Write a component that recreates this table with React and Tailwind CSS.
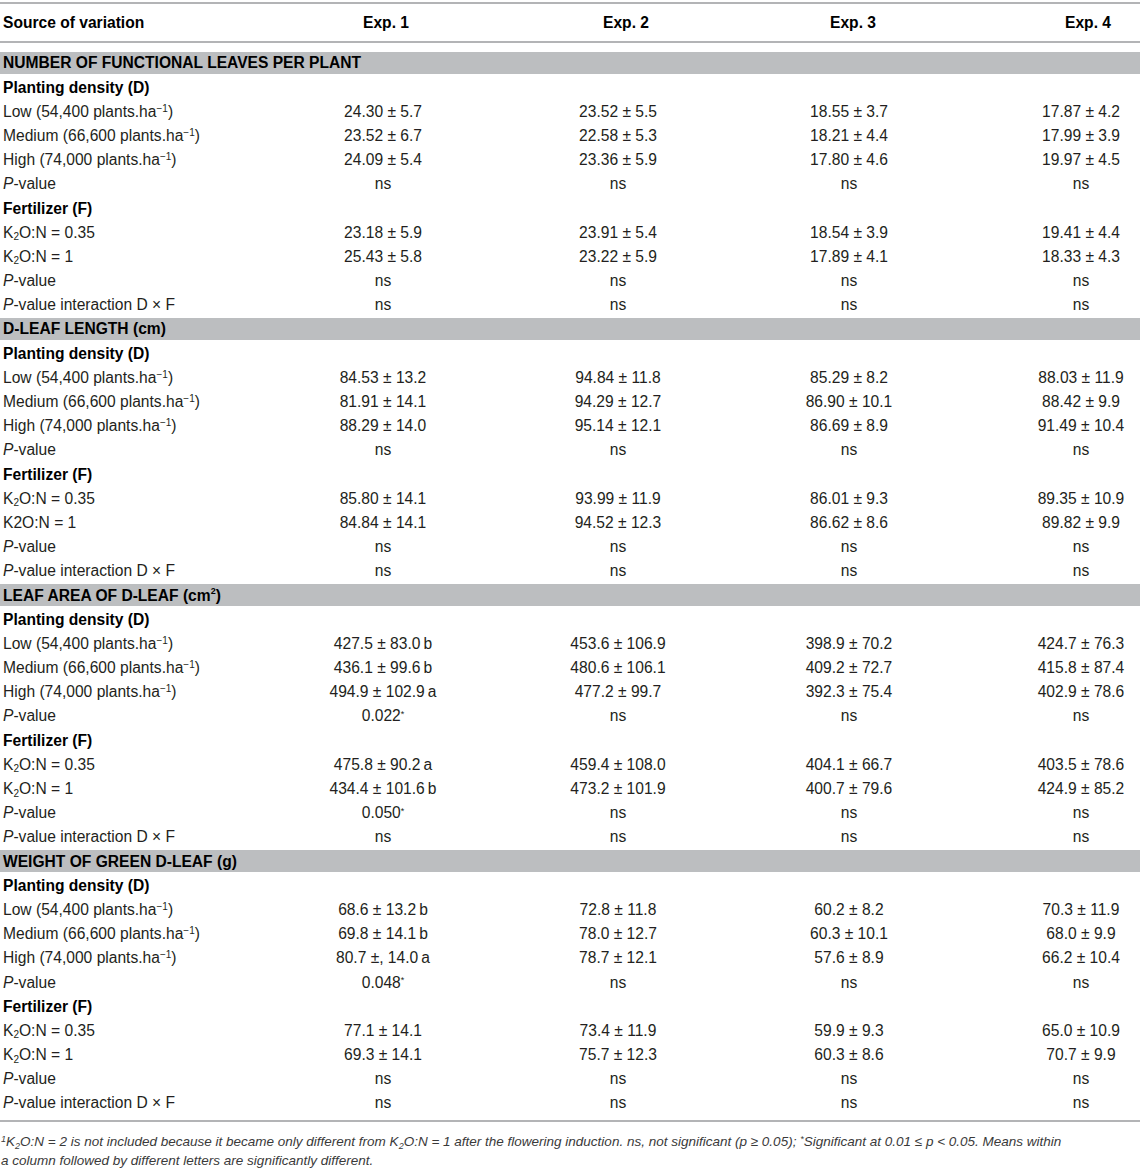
import React from "react";

const Ha = () => (
  <>
    plants.ha<sup className="text-[10px]">−1</sup>
  </>
);

const K2O = ({ sub = true }) =>
  sub ? (
    <>
      K<sub className="text-[10px]">2</sub>O:N
    </>
  ) : (
    <>K2O:N</>
  );

const P = () => (
  <>
    <i>P</i>-value
  </>
);

const Star = ({ v }) => (
  <>
    {v}
    <sup className="text-[9px]">*</sup>
  </>
);

const NS = ["ns", "ns", "ns", "ns"];

const sections = [
  {
    title: "NUMBER OF FUNCTIONAL LEAVES PER PLANT",
    low: ["24.30 ± 5.7", "23.52 ± 5.5", "18.55 ± 3.7", "17.87 ± 4.2"],
    medium: ["23.52 ± 6.7", "22.58 ± 5.3", "18.21 ± 4.4", "17.99 ± 3.9"],
    high: ["24.09 ± 5.4", "23.36 ± 5.9", "17.80 ± 4.6", "19.97 ± 4.5"],
    pD: NS,
    k035: ["23.18 ± 5.9", "23.91 ± 5.4", "18.54 ± 3.9", "19.41 ± 4.4"],
    k1: ["25.43 ± 5.8", "23.22 ± 5.9", "17.89 ± 4.1", "18.33 ± 4.3"],
    pF: NS,
  },
  {
    title: "D-LEAF LENGTH (cm)",
    low: ["84.53 ± 13.2", "94.84 ± 11.8", "85.29 ± 8.2", "88.03 ± 11.9"],
    medium: ["81.91 ± 14.1", "94.29 ± 12.7", "86.90 ± 10.1", "88.42 ± 9.9"],
    high: ["88.29 ± 14.0", "95.14 ± 12.1", "86.69 ± 8.9", "91.49 ± 10.4"],
    pD: NS,
    k035: ["85.80 ± 14.1", "93.99 ± 11.9", "86.01 ± 9.3", "89.35 ± 10.9"],
    k1: ["84.84 ± 14.1", "94.52 ± 12.3", "86.62 ± 8.6", "89.82 ± 9.9"],
    k1Plain: true,
    pF: NS,
  },
  {
    title: (
      <>
        LEAF AREA OF D-LEAF (cm<sup className="text-[9px]">2</sup>)
      </>
    ),
    low: ["427.5 ± 83.0\u2009b", "453.6 ± 106.9", "398.9 ± 70.2", "424.7 ± 76.3"],
    medium: ["436.1 ± 99.6\u2009b", "480.6 ± 106.1", "409.2 ± 72.7", "415.8 ± 87.4"],
    high: ["494.9 ± 102.9\u2009a", "477.2 ± 99.7", "392.3 ± 75.4", "402.9 ± 78.6"],
    pD: [<Star v="0.022" />, "ns", "ns", "ns"],
    k035: ["475.8 ± 90.2\u2009a", "459.4 ± 108.0", "404.1 ± 66.7", "403.5 ± 78.6"],
    k1: ["434.4 ± 101.6\u2009b", "473.2 ± 101.9", "400.7 ± 79.6", "424.9 ± 85.2"],
    pF: [<Star v="0.050" />, "ns", "ns", "ns"],
  },
  {
    title: "WEIGHT OF GREEN D-LEAF (g)",
    low: ["68.6 ± 13.2\u2009b", "72.8 ± 11.8", "60.2 ± 8.2", "70.3 ± 11.9"],
    medium: ["69.8 ± 14.1\u2009b", "78.0 ± 12.7", "60.3 ± 10.1", "68.0 ± 9.9"],
    high: ["80.7 ±, 14.0\u2009a", "78.7 ± 12.1", "57.6 ± 8.9", "66.2 ± 10.4"],
    pD: [<Star v="0.048" />, "ns", "ns", "ns"],
    k035: ["77.1 ± 14.1", "73.4 ± 11.9", "59.9 ± 9.3", "65.0 ± 10.9"],
    k1: ["69.3 ± 14.1", "75.7 ± 12.3", "60.3 ± 8.6", "70.7 ± 9.9"],
    pF: NS,
  },
];

const grid = "grid grid-cols-[266px_234px_236px_226px_178px] items-center";

const Row = ({ label, values, bold }) => (
  <div className={`${grid} h-[24.2px]`}>
    <div className={`pl-[3px] whitespace-nowrap ${bold ? "font-bold text-black" : ""}`}>
      {label}
    </div>
    {values &&
      values.map((v, i) => (
        <div key={i} className={`text-center whitespace-nowrap ${i === 3 ? "pl-[60px]" : ""}`}>
          {v}
        </div>
      ))}
  </div>
);

const Band = ({ children }) => (
  <div className="h-[24.2px] py-[1px]">
    <div className="h-full bg-[#bcbec0] pl-[3px] flex items-center font-bold text-black whitespace-nowrap">
      {children}
    </div>
  </div>
);

const Section = ({ s }) => (
  <>
    <Band>{s.title}</Band>
    <Row label="Planting density (D)" bold />
    <Row label={<>Low (54,400 <Ha />)</>} values={s.low} />
    <Row label={<>Medium (66,600 <Ha />)</>} values={s.medium} />
    <Row label={<>High (74,000 <Ha />)</>} values={s.high} />
    <Row label={<P />} values={s.pD} />
    <Row label="Fertilizer (F)" bold />
    <Row label={<><K2O /> = 0.35</>} values={s.k035} />
    <Row label={<><K2O sub={!s.k1Plain} /> = 1</>} values={s.k1} />
    <Row label={<P />} values={s.pF} />
    <Row label={<><P /> interaction D × F</>} values={NS} />
  </>
);

export default function App() {
  return (
    <div className="w-[1142px] bg-white font-['Liberation_Sans',Arial,sans-serif] text-[15.6px] text-[#231f20]">
      <div className="w-[1140px] pt-[2px]">
        <div className="h-[2px] bg-[#b3b4b6]" />
        <div className={`${grid} h-[37px] font-bold text-black`}>
          <div className="pl-[3px]">Source of variation</div>
          <div className="text-center pl-[6px]">Exp. 1</div>
          <div className="text-center pl-[16px]">Exp. 2</div>
          <div className="text-center pl-[8px]">Exp. 3</div>
          <div className="text-center pl-[74px]">Exp. 4</div>
        </div>
        <div className="h-[2px] bg-[#b3b4b6]" />
        <div className="h-[8px]" />
        {sections.map((s, i) => (
          <Section key={i} s={s} />
        ))}
        <div className="h-[5px]" />
        <div className="h-[2px] bg-[#b3b4b6]" />
        <div className="pt-[10px] pl-[1px] text-[13.5px] leading-[19px] italic text-[#3a3a3a]">
          <sup className="text-[9px]">1</sup>K<sub className="text-[9px]">2</sub>O:N = 2 is not included because it became only different from K
          <sub className="text-[9px]">2</sub>O:N = 1 after the flowering induction. ns, not significant (p ≥ 0.05);{" "}
          <sup className="text-[9px]">*</sup>Significant at 0.01 ≤ p &lt; 0.05. Means within
          <br />a column followed by different letters are significantly different.
        </div>
      </div>
    </div>
  );
}
